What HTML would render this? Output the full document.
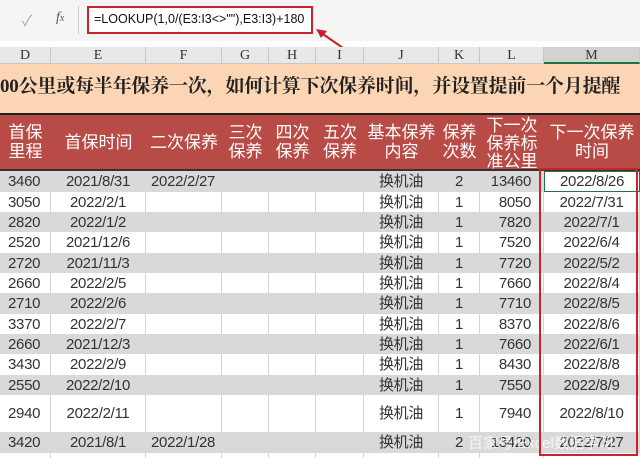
<!DOCTYPE html>
<html><head><meta charset="utf-8"><style>
*{margin:0;padding:0;box-sizing:border-box}
body{width:640px;height:458px;overflow:hidden;background:#fff;position:relative;font-family:"Liberation Sans","Noto Sans CJK SC",sans-serif}
.a{position:absolute}
.fb{left:0;top:0;width:640px;height:41px;background:#f5f5f5}
.colh{left:0;top:47px;width:640px;height:17px;background:#e8e8e8;border-bottom:1px solid #c8c8c8}
.cl{position:absolute;top:0;height:17px;line-height:17px;text-align:center;font-family:"Liberation Serif",serif;font-size:14px;color:#333;border-right:1px solid #c8c8c8}
.title{left:0;top:64px;width:640px;height:49px;background:#fcd5b4;white-space:nowrap;overflow:hidden;font-family:"Liberation Serif","Noto Serif CJK SC",serif;font-weight:bold;font-size:19px;line-height:46px;color:#222;letter-spacing:-0.2px}
.hdr{left:0;top:113px;width:640px;height:58px;background:#b94b46;border-top:2px solid #222;border-bottom:2px solid #333}
.hc{position:absolute;top:0;height:54px;display:flex;align-items:center;justify-content:center;text-align:center;color:#fff;font-size:17px;line-height:19px}
.row{position:absolute;left:0;width:640px}
.g{background:#d9d9d9}
.c{position:absolute;top:0;height:100%;display:flex;align-items:center;font-size:15px;line-height:1;color:#333;border-right:1px solid #d4d4d4;letter-spacing:-0.3px}
.g .c{border-right-color:#d9d9d9}
</style></head><body>
<div class="a fb"></div>
<div class="a" style="left:22px;top:10px;color:#aaa;font-size:15px">✓</div>
<div class="a" style="left:56px;top:10px;color:#555;font-size:14px;font-style:italic;font-family:'Liberation Serif',serif">f<span style="font-size:10px">x</span></div>
<div class="a" style="left:78px;top:6px;width:1px;height:28px;background:#ccc"></div>
<div class="a" style="left:87px;top:6px;width:226px;height:28px;background:#fff;border:2px solid #d0202a"></div>
<div class="a" style="left:94px;top:12px;font-size:12.5px;color:#111;white-space:nowrap">=LOOKUP(1,0/(E3:I3&lt;&gt;""),E3:I3)+180</div>
<svg class="a" style="left:310px;top:24px" width="40" height="28"><line x1="33" y1="24" x2="10" y2="8" stroke="#c8202a" stroke-width="2"/><polygon points="6,5 17,7 11,14" fill="#c8202a"/></svg>
<div class="a colh">
<div class="cl" style="left:0;width:51px">D</div><div class="cl" style="left:51px;width:95px">E</div><div class="cl" style="left:146px;width:76px">F</div><div class="cl" style="left:222px;width:47px">G</div><div class="cl" style="left:269px;width:47px">H</div><div class="cl" style="left:316px;width:48px">I</div><div class="cl" style="left:364px;width:75px">J</div><div class="cl" style="left:439px;width:41px">K</div><div class="cl" style="left:480px;width:64px">L</div><div class="cl" style="left:544px;width:96px;background:#d2d2d2;border-bottom:2px solid #217346">M</div>
</div>
<div class="a title">00公里或每半年保养一次，如何计算下次保养时间，并设置提前一个月提醒</div>
<div class="a hdr">
<div class="hc" style="left:0;width:51px">首保<br>里程</div>
<div class="hc" style="left:51px;width:95px">首保时间</div>
<div class="hc" style="left:146px;width:76px">二次保养</div>
<div class="hc" style="left:222px;width:47px">三次<br>保养</div>
<div class="hc" style="left:269px;width:47px">四次<br>保养</div>
<div class="hc" style="left:316px;width:48px">五次<br>保养</div>
<div class="hc" style="left:364px;width:75px">基本保养<br>内容</div>
<div class="hc" style="left:439px;width:41px">保养<br>次数</div>
<div class="hc" style="left:480px;width:64px;top:2px;line-height:18px">下一次<br>保养标<br>准公里</div>
<div class="hc" style="left:544px;width:96px">下一次保养<br>时间</div>
</div>
<div class="row g" style="top:171px;height:21px"><div class="c" style="left:0;width:51px;padding-left:8px">3460</div><div class="c" style="left:51px;width:95px;justify-content:center">2021/8/31</div><div class="c" style="left:146px;width:76px;padding-left:5px">2022/2/27</div><div class="c" style="left:222px;width:47px"></div><div class="c" style="left:269px;width:47px"></div><div class="c" style="left:316px;width:48px"></div><div class="c" style="left:364px;width:75px;justify-content:center">换机油</div><div class="c" style="left:439px;width:41px;justify-content:center">2</div><div class="c" style="left:480px;width:64px;justify-content:flex-end;padding-right:12px">13460</div><div class="c" style="left:544px;width:96px;justify-content:center;background:#fff;border:1.5px solid #217346">2022/8/26</div></div>
<div class="row" style="top:192px;height:20px"><div class="c" style="left:0;width:51px;padding-left:8px">3050</div><div class="c" style="left:51px;width:95px;justify-content:center">2022/2/1</div><div class="c" style="left:146px;width:76px"></div><div class="c" style="left:222px;width:47px"></div><div class="c" style="left:269px;width:47px"></div><div class="c" style="left:316px;width:48px"></div><div class="c" style="left:364px;width:75px;justify-content:center">换机油</div><div class="c" style="left:439px;width:41px;justify-content:center">1</div><div class="c" style="left:480px;width:64px;justify-content:flex-end;padding-right:12px">8050</div><div class="c" style="left:544px;width:96px;justify-content:center">2022/7/31</div></div>
<div class="row g" style="top:212px;height:20px"><div class="c" style="left:0;width:51px;padding-left:8px">2820</div><div class="c" style="left:51px;width:95px;justify-content:center">2022/1/2</div><div class="c" style="left:364px;width:75px;justify-content:center">换机油</div><div class="c" style="left:439px;width:41px;justify-content:center">1</div><div class="c" style="left:480px;width:64px;justify-content:flex-end;padding-right:12px">7820</div><div class="c" style="left:544px;width:96px;justify-content:center">2022/7/1</div></div>
<div class="row" style="top:232px;height:21px"><div class="c" style="left:0;width:51px;padding-left:8px">2520</div><div class="c" style="left:51px;width:95px;justify-content:center">2021/12/6</div><div class="c" style="left:146px;width:76px"></div><div class="c" style="left:222px;width:47px"></div><div class="c" style="left:269px;width:47px"></div><div class="c" style="left:316px;width:48px"></div><div class="c" style="left:364px;width:75px;justify-content:center">换机油</div><div class="c" style="left:439px;width:41px;justify-content:center">1</div><div class="c" style="left:480px;width:64px;justify-content:flex-end;padding-right:12px">7520</div><div class="c" style="left:544px;width:96px;justify-content:center">2022/6/4</div></div>
<div class="row g" style="top:253px;height:20px"><div class="c" style="left:0;width:51px;padding-left:8px">2720</div><div class="c" style="left:51px;width:95px;justify-content:center">2021/11/3</div><div class="c" style="left:364px;width:75px;justify-content:center">换机油</div><div class="c" style="left:439px;width:41px;justify-content:center">1</div><div class="c" style="left:480px;width:64px;justify-content:flex-end;padding-right:12px">7720</div><div class="c" style="left:544px;width:96px;justify-content:center">2022/5/2</div></div>
<div class="row" style="top:273px;height:20px"><div class="c" style="left:0;width:51px;padding-left:8px">2660</div><div class="c" style="left:51px;width:95px;justify-content:center">2022/2/5</div><div class="c" style="left:146px;width:76px"></div><div class="c" style="left:222px;width:47px"></div><div class="c" style="left:269px;width:47px"></div><div class="c" style="left:316px;width:48px"></div><div class="c" style="left:364px;width:75px;justify-content:center">换机油</div><div class="c" style="left:439px;width:41px;justify-content:center">1</div><div class="c" style="left:480px;width:64px;justify-content:flex-end;padding-right:12px">7660</div><div class="c" style="left:544px;width:96px;justify-content:center">2022/8/4</div></div>
<div class="row g" style="top:293px;height:21px"><div class="c" style="left:0;width:51px;padding-left:8px">2710</div><div class="c" style="left:51px;width:95px;justify-content:center">2022/2/6</div><div class="c" style="left:364px;width:75px;justify-content:center">换机油</div><div class="c" style="left:439px;width:41px;justify-content:center">1</div><div class="c" style="left:480px;width:64px;justify-content:flex-end;padding-right:12px">7710</div><div class="c" style="left:544px;width:96px;justify-content:center">2022/8/5</div></div>
<div class="row" style="top:314px;height:20px"><div class="c" style="left:0;width:51px;padding-left:8px">3370</div><div class="c" style="left:51px;width:95px;justify-content:center">2022/2/7</div><div class="c" style="left:146px;width:76px"></div><div class="c" style="left:222px;width:47px"></div><div class="c" style="left:269px;width:47px"></div><div class="c" style="left:316px;width:48px"></div><div class="c" style="left:364px;width:75px;justify-content:center">换机油</div><div class="c" style="left:439px;width:41px;justify-content:center">1</div><div class="c" style="left:480px;width:64px;justify-content:flex-end;padding-right:12px">8370</div><div class="c" style="left:544px;width:96px;justify-content:center">2022/8/6</div></div>
<div class="row g" style="top:334px;height:20px"><div class="c" style="left:0;width:51px;padding-left:8px">2660</div><div class="c" style="left:51px;width:95px;justify-content:center">2021/12/3</div><div class="c" style="left:364px;width:75px;justify-content:center">换机油</div><div class="c" style="left:439px;width:41px;justify-content:center">1</div><div class="c" style="left:480px;width:64px;justify-content:flex-end;padding-right:12px">7660</div><div class="c" style="left:544px;width:96px;justify-content:center">2022/6/1</div></div>
<div class="row" style="top:354px;height:21px"><div class="c" style="left:0;width:51px;padding-left:8px">3430</div><div class="c" style="left:51px;width:95px;justify-content:center">2022/2/9</div><div class="c" style="left:146px;width:76px"></div><div class="c" style="left:222px;width:47px"></div><div class="c" style="left:269px;width:47px"></div><div class="c" style="left:316px;width:48px"></div><div class="c" style="left:364px;width:75px;justify-content:center">换机油</div><div class="c" style="left:439px;width:41px;justify-content:center">1</div><div class="c" style="left:480px;width:64px;justify-content:flex-end;padding-right:12px">8430</div><div class="c" style="left:544px;width:96px;justify-content:center">2022/8/8</div></div>
<div class="row g" style="top:375px;height:20px"><div class="c" style="left:0;width:51px;padding-left:8px">2550</div><div class="c" style="left:51px;width:95px;justify-content:center">2022/2/10</div><div class="c" style="left:364px;width:75px;justify-content:center">换机油</div><div class="c" style="left:439px;width:41px;justify-content:center">1</div><div class="c" style="left:480px;width:64px;justify-content:flex-end;padding-right:12px">7550</div><div class="c" style="left:544px;width:96px;justify-content:center">2022/8/9</div></div>
<div class="row" style="top:395px;height:37px"><div class="c" style="left:0;width:51px;padding-left:8px">2940</div><div class="c" style="left:51px;width:95px;justify-content:center">2022/2/11</div><div class="c" style="left:146px;width:76px"></div><div class="c" style="left:222px;width:47px"></div><div class="c" style="left:269px;width:47px"></div><div class="c" style="left:316px;width:48px"></div><div class="c" style="left:364px;width:75px;justify-content:center">换机油</div><div class="c" style="left:439px;width:41px;justify-content:center">1</div><div class="c" style="left:480px;width:64px;justify-content:flex-end;padding-right:12px">7940</div><div class="c" style="left:544px;width:96px;justify-content:center">2022/8/10</div></div>
<div class="row g" style="top:432px;height:21px"><div class="c" style="left:0;width:51px;padding-left:8px">3420</div><div class="c" style="left:51px;width:95px;justify-content:center">2021/8/1</div><div class="c" style="left:146px;width:76px;padding-left:5px">2022/1/28</div><div class="c" style="left:364px;width:75px;justify-content:center">换机油</div><div class="c" style="left:439px;width:41px;justify-content:center">2</div><div class="c" style="left:480px;width:64px;justify-content:flex-end;padding-right:12px">13420</div><div class="c" style="left:544px;width:96px;justify-content:center">2022/7/27</div></div>
<div class="row" style="top:453px;height:5px"><div class="c" style="left:0;width:51px"></div><div class="c" style="left:51px;width:95px"></div><div class="c" style="left:146px;width:76px"></div><div class="c" style="left:222px;width:47px"></div><div class="c" style="left:269px;width:47px"></div><div class="c" style="left:316px;width:48px"></div><div class="c" style="left:364px;width:75px"></div><div class="c" style="left:439px;width:41px"></div><div class="c" style="left:480px;width:64px"></div></div>
<div class="a" style="left:468px;top:432px;font-size:15px;color:rgba(255,255,255,0.75);white-space:nowrap">百家号/Excel数据学习</div>
<div class="a" style="left:539px;top:168px;width:99px;height:288px;border:2px solid #d0202a"></div>
</body></html>
